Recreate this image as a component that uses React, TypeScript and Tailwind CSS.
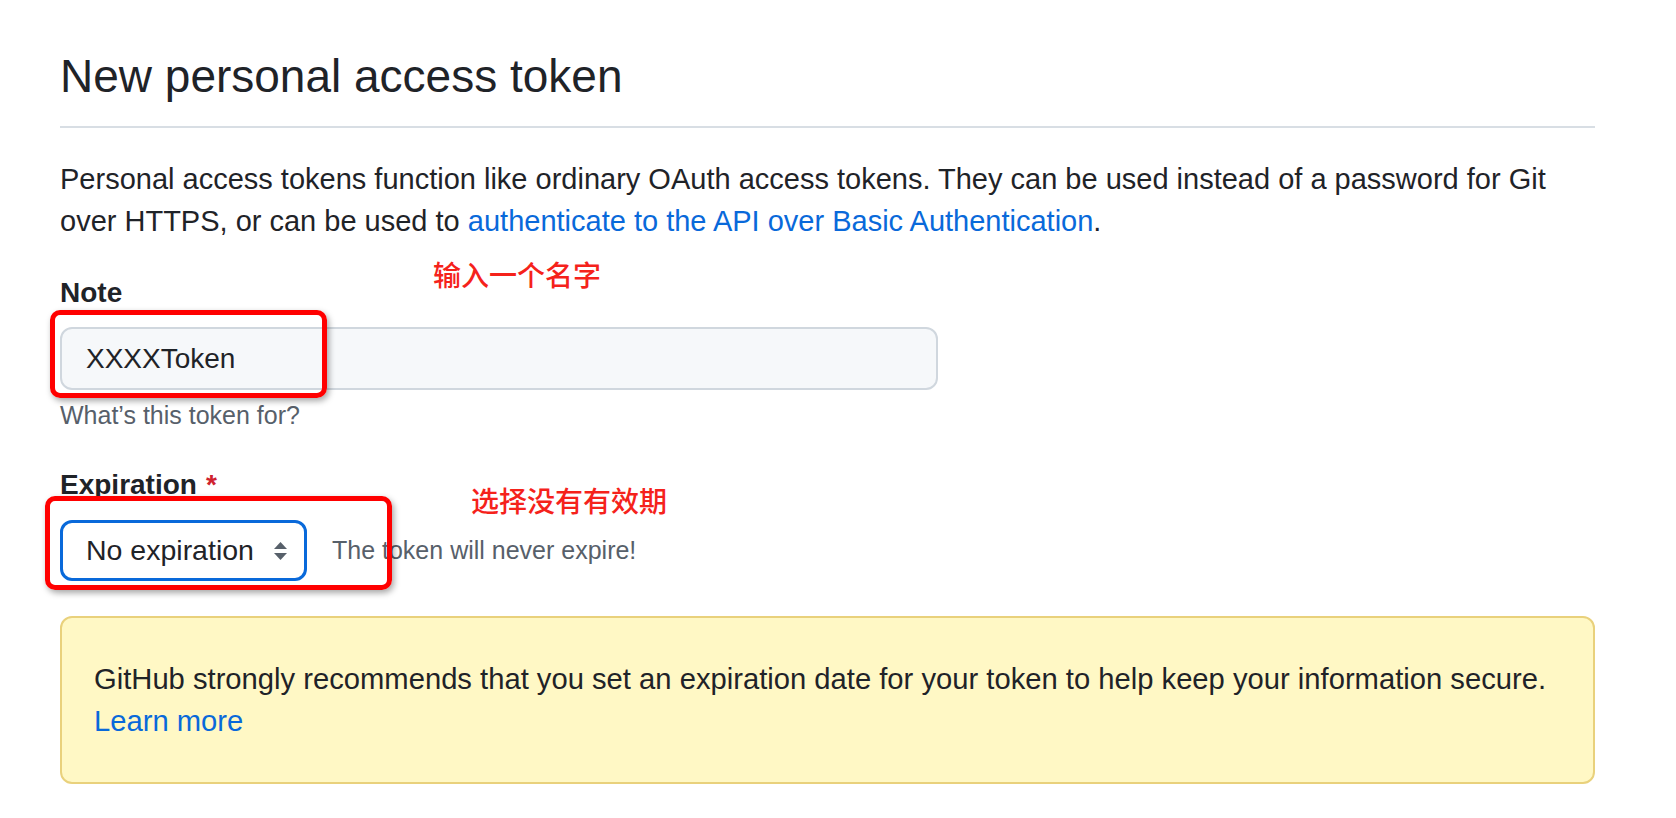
import React from "react";

function SelectArrows() {
  return (
    <svg width="15" height="20" viewBox="0 0 15 20" className="shrink-0">
      <path d="M7.5 1 L14 8 L1 8 Z" fill="#57606a" />
      <path d="M1 12 L14 12 L7.5 19 Z" fill="#57606a" />
    </svg>
  );
}

export default function App() {
  return (
    <div
      className="relative min-h-screen w-full bg-white text-[#1f2328]"
      style={{ fontFamily: '"Liberation Sans", Arial, sans-serif' }}
    >
      <div className="pl-[60px] pr-[81px] pt-[48px] pb-[40px]">
        <h1 className="text-[46px] leading-[56px] font-normal text-[#1f2328]">
          New personal access token
        </h1>
        <div className="mt-[22px] h-[2px] bg-[#d8dee4]" />

        <p className="mt-[30px] text-[29px] leading-[42px] text-[#1f2328]">
          Personal access tokens function like ordinary OAuth access tokens. They can be used instead of a password for Git
          <br />
          over HTTPS, or can be used to{" "}
          <a className="text-[#0969da]">authenticate to the API over Basic Authentication</a>.
        </p>

        <div className="mt-[30px] text-[28px] leading-[42px] font-bold text-[#1f2328]">Note</div>
        <div className="mt-[13px] flex h-[63px] w-[878px] items-center rounded-[12px] border-2 border-[#d0d7de] bg-[#f6f8fa] pl-[24px] text-[28px] text-[#1f2328]">
          XXXXToken
        </div>
        <div className="mt-[7px] text-[25px] leading-[36px] text-[#57606a]">What’s this token for?</div>

        <div className="mt-[31px] flex items-baseline text-[28px] leading-[42px] font-bold text-[#1f2328]">
          <span>Expiration</span>
          <span className="ml-[9px] text-[#cf222e]">*</span>
        </div>
        <div className="mt-[14px] flex items-center">
          <div className="flex h-[61px] w-[247px] items-center justify-between rounded-[12px] border-[3px] border-[#0969da] bg-white pl-[23px] pr-[16px] text-[28.5px] text-[#1f2328]">
            <span>No expiration</span>
            <SelectArrows />
          </div>
          <span className="ml-[25px] text-[25px] text-[#57606a]">The token will never expire!</span>
        </div>

        <div className="mt-[35px] rounded-[12px] border-2 border-[#e9d17c] bg-[#fff8c5] px-[32px] py-[40px] text-[29.2px] leading-[42px] text-[#1f2328]">
          GitHub strongly recommends that you set an expiration date for your token to help keep your information secure.
          <br />
          <a className="text-[#0969da]">Learn more</a>
        </div>
      </div>

      {/* Annotations */}
      <div className="pointer-events-none absolute left-[50px] top-[310px] h-[88px] w-[277px] rounded-[10px] border-[5px] border-[#ff0000] shadow-[2px_3px_6px_rgba(0,0,0,0.35)]" />
      <div className="pointer-events-none absolute left-[45px] top-[496px] h-[94px] w-[347px] rounded-[10px] border-[5px] border-[#ff0000] shadow-[2px_3px_6px_rgba(0,0,0,0.35)]" />
      <div
        className="absolute left-[433px] top-[258px] text-[28px] leading-[32px] font-medium text-[#f5221b]"
        style={{ fontFamily: '"Noto Sans CJK SC", sans-serif' }}
      >
        输入一个名字
      </div>
      <div
        className="absolute left-[471px] top-[484px] text-[28px] leading-[32px] font-medium text-[#f5221b]"
        style={{ fontFamily: '"Noto Sans CJK SC", sans-serif' }}
      >
        选择没有有效期
      </div>
    </div>
  );
}
